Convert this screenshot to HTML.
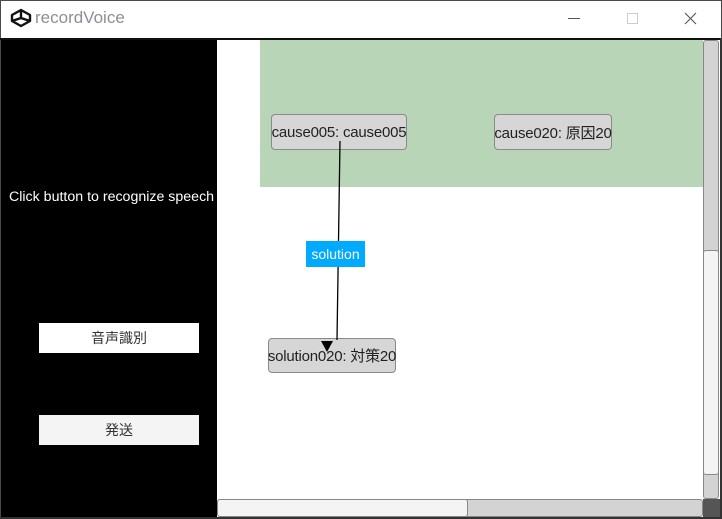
<!DOCTYPE html>
<html><head><meta charset="utf-8"><style>
*{margin:0;padding:0;box-sizing:border-box}
body{width:722px;height:519px;position:relative;overflow:hidden;background:#fff;font-family:"Liberation Sans","Noto Sans CJK JP",sans-serif}
.a{position:absolute}
.node{position:absolute;background:#d6d6d6;border:1px solid #8a8a8a;border-radius:4px;font-size:15px;color:#222;display:flex;align-items:center;justify-content:center;white-space:nowrap;letter-spacing:-0.2px}
.btn{position:absolute;left:39px;width:160px;height:30px;display:flex;align-items:center;justify-content:center;font-size:14px;color:#333}
</style></head><body>
<div class="a" style="left:0;top:0;width:722px;height:519px;border:1px solid #4a4a4a"></div>
<svg class="a" style="left:10px;top:8px" width="22" height="20" viewBox="0 0 22 20"><path d="M11 2 L20 7 V13 L11 18 L2 13 V7 Z M11 2 V10 M2 13 L11 10 L20 13" fill="none" stroke="#111" stroke-width="2.4" stroke-linejoin="round"/></svg>
<div class="a" style="left:35px;top:8px;font-size:17px;color:#8a8f98;font-family:'Liberation Sans','DejaVu Sans',sans-serif">recordVoice</div>
<div class="a" style="left:568px;top:18px;width:12px;height:1px;background:#555"></div>
<div class="a" style="left:627px;top:13px;width:11px;height:11px;border:1px solid #ccc"></div>
<svg class="a" style="left:684px;top:12px" width="13" height="13"><path d="M1 1L12 12M12 1L1 12" stroke="#555" stroke-width="1.1"/></svg>
<div class="a" style="left:0;top:38px;width:722px;height:2px;background:#111"></div>
<div class="a" style="left:1px;top:40px;width:216px;height:478px;background:#000"></div>
<div class="a" style="left:9px;top:189px;font-size:14.2px;color:#fff;white-space:nowrap">Click button to recognize speech</div>
<div class="btn" style="top:323px;background:#fff">音声識別</div>
<div class="btn" style="top:415px;background:#f4f4f4">発送</div>
<div class="a" style="left:217px;top:40px;width:486px;height:459px;background:#fff"></div>
<div class="a" style="left:260px;top:40px;width:443px;height:147px;background:#b8d5b8"></div>
<div class="node" style="left:271px;top:114px;width:136px;height:36px">cause005: cause005</div>
<div class="node" style="left:494px;top:114px;width:118px;height:36px">cause020: 原因20</div>
<div class="node" style="left:268px;top:338px;width:128px;height:35px">solution020: 対策20</div>
<svg class="a" style="left:217px;top:40px" width="486" height="459"><path d="M123 101 L120 300" stroke="#000" stroke-width="1.3"/><path d="M104 301 L116 301 L110 312 Z" fill="#000"/></svg>
<div class="a" style="left:306px;top:241px;width:59px;height:26px;background:#00aaff;color:#fff;font-size:14px;display:flex;align-items:center;justify-content:center">solution</div>
<div class="a" style="left:703px;top:40px;width:16px;height:459px;background:#d3d3d3;border:1px solid #888;border-radius:3px"></div>
<div class="a" style="left:703px;top:250px;width:16px;height:225px;background:#f4f4f4;border:1px solid #888;border-radius:3px"></div>
<div class="a" style="left:217px;top:499px;width:486px;height:18px;background:#d3d3d3;border:1px solid #888;border-radius:3px"></div>
<div class="a" style="left:217px;top:499px;width:251px;height:18px;background:#f4f4f4;border:1px solid #888;border-radius:3px"></div>
<div class="a" style="left:703px;top:499px;width:17px;height:18px;background:#555"></div>
<div class="a" style="left:720px;top:38px;width:2px;height:481px;background:#333"></div>
<div class="a" style="left:0;top:517px;width:722px;height:2px;background:#333"></div>
</body></html>
